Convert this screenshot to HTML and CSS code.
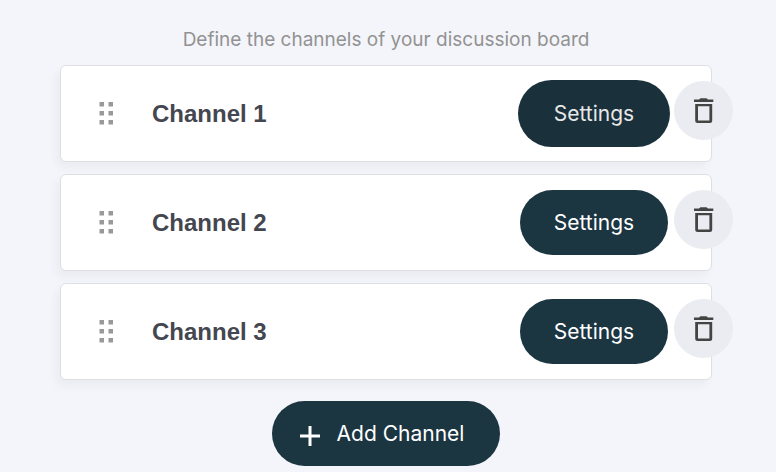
FILE: index.html
```html
<!DOCTYPE html>
<html lang="en">

<head>
    <meta charset="UTF-8">
    <meta name="viewport" content="width=device-width, initial-scale=1.0">
    <title>Discussion Board Channels</title>
    <link rel="stylesheet" href="styles.css">
</head>

<body>
    <svg class="sprite" aria-hidden="true">
        <symbol id="drag" viewBox="0 0 16 24">
            <path d="M.5 0h4.500v4.500H.5zM9.500 0H14v4.500H9.500zM.5 9h4.500v4.500H.5zM9.500 9H14v4.500H9.500zM.5 18h4.500v4.500H.5zM9.500 18H14v4.500H9.500z" />
        </symbol>
        <symbol id="trash" viewBox="0 0 20 26">
            <path fill-rule="evenodd" d="M0 1.500h5l1.500-1.200h6l1.500 1.200h5.300v2.500H0zM1.200 6h17v16.500a2.500 2.500 0 0 1-2.500 2.500h-12a2.500 2.500 0 0 1-2.500-2.500zM4 8.300v14.200h11.400V8.300z" />
        </symbol>
    </svg>

    <main class="channels">
        <p class="hint">Define the channels of your discussion board</p>

        <ul class="channel-list">
            <li class="channel">
                <svg class="drag-icon" aria-hidden="true"><use href="#drag" /></svg>
                <span class="channel-name">Channel 1</span>
                <button type="button" class="btn settings active">Settings</button>
                <button type="button" class="delete" aria-label="Delete Channel 1"><svg class="trash-icon"><use href="#trash" /></svg></button>
            </li>
            <li class="channel">
                <svg class="drag-icon" aria-hidden="true"><use href="#drag" /></svg>
                <span class="channel-name">Channel 2</span>
                <button type="button" class="btn settings">Settings</button>
                <button type="button" class="delete" aria-label="Delete Channel 2"><svg class="trash-icon"><use href="#trash" /></svg></button>
            </li>
            <li class="channel">
                <svg class="drag-icon" aria-hidden="true"><use href="#drag" /></svg>
                <span class="channel-name">Channel 3</span>
                <button type="button" class="btn settings">Settings</button>
                <button type="button" class="delete" aria-label="Delete Channel 3"><svg class="trash-icon"><use href="#trash" /></svg></button>
            </li>
        </ul>

        <button type="button" class="btn add">
            <svg class="plus-icon" viewBox="0 0 20 24" aria-hidden="true"><path d="M8.500 4h3v8.500H20v3h-8.500V24h-3v-8.500H0v-3h8.500z" /></svg>
            Add Channel
        </button>
    </main>
</body>

</html>
```

FILE: styles.css
```css
* {
    box-sizing: border-box;
}

body {
    margin: 0;
    background-color: #f4f5fa;
    font-family: Inter, "Liberation Sans", sans-serif;
}

svg {
    display: block;
    fill: currentColor;
}

.sprite {
    display: none;
}

.channels {
    display: flex;
    flex-direction: column;
    align-items: center;
    padding: 28px 64px 6px 60px;
}

.hint {
    margin: 0 0 13px;
    font-size: 19px;
    line-height: 24px;
    color: #929292;
}

.channel-list {
    display: flex;
    flex-direction: column;
    gap: 12px;
    width: 100%;
    margin: 0 0 21px;
    padding: 0;
    list-style: none;
}

.channel {
    display: flex;
    align-items: center;
    height: 97px;
    padding: 15px 0 15px 38px;
    background-color: #fff;
    border: 1px solid #dedfe2;
    border-radius: 6px;
    box-shadow: -4px 6px 10px rgba(0, 0, 0, 0.04);
}

.drag-icon {
    width: 16px;
    height: 24px;
    color: #999;
}

.channel-name {
    flex: 1;
    margin-left: 37px;
    font-family: "Liberation Sans", Arial, sans-serif;
    font-size: 24px;
    font-weight: bold;
    color: #444650;
}

.btn {
    display: flex;
    align-items: center;
    justify-content: center;
    height: 65px;
    border: none;
    border-radius: 34px;
    background-color: #1b3541;
    color: #fff;
    font-family: inherit;
    font-size: 21px;
    cursor: pointer;
}

.settings {
    width: 148px;
}

.settings.active {
    width: 152px;
    height: 67px;
    margin: 0 -2px;
    background-color: #1a313c;
    color: #e8e8e8;
}

/* sticks out over the right edge of the card */
.delete {
    display: flex;
    align-items: center;
    justify-content: center;
    align-self: flex-start;
    width: 59px;
    height: 59px;
    margin: 0 -22px 0 6px;
    padding: 0;
    border: none;
    border-radius: 50%;
    background-color: #ebecf1;
    color: #444;
    cursor: pointer;
}

.trash-icon {
    width: 20px;
    height: 26px;
}

.add {
    gap: 17px;
    width: 228px;
    padding: 0 14px 0 6px;
}

.plus-icon {
    width: 20px;
    height: 24px;
}
```
